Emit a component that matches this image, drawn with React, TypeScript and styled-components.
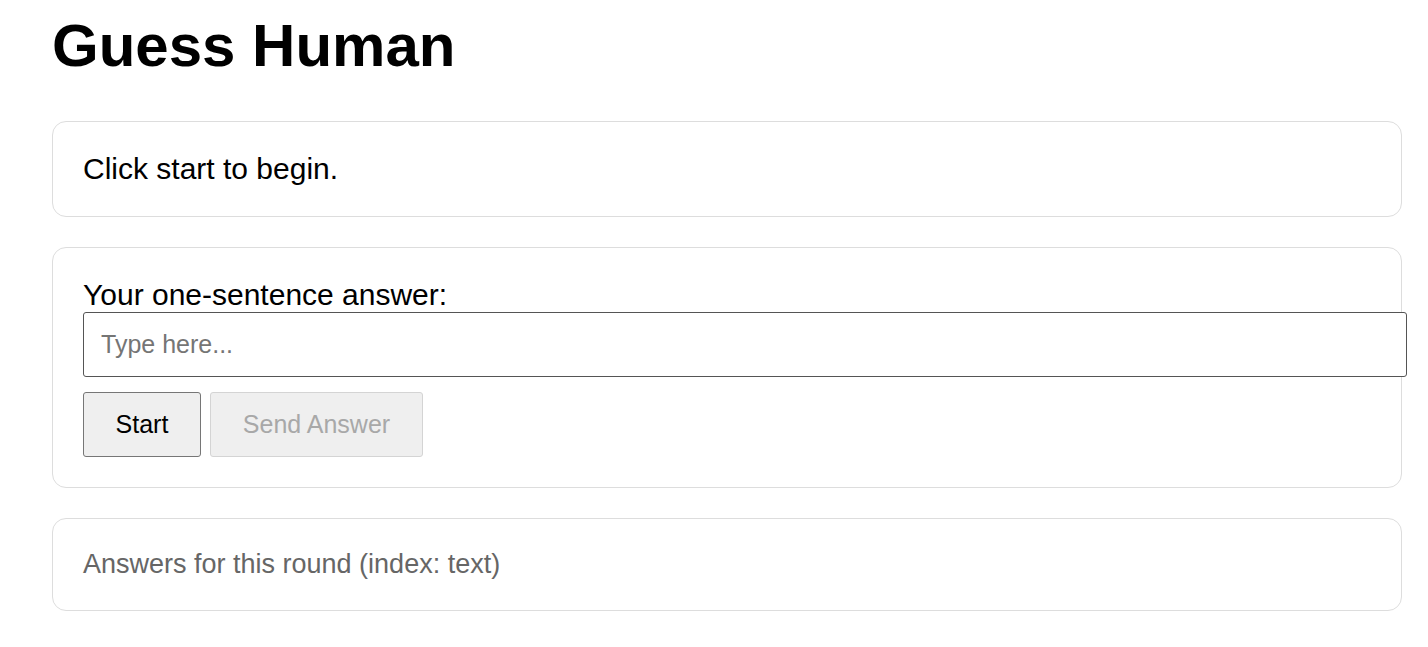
import React from "react";
import styled, { createGlobalStyle } from "styled-components";

const Global = createGlobalStyle`
  html, body { margin: 0; padding: 0; background: #fff; }
  body { font-family: "Liberation Sans", Arial, sans-serif; color: #000; font-size: 30px; }
  * { box-sizing: border-box; }
`;

const Page = styled.main`
  width: 1350px;
  margin-left: 52px;
  display: flex;
  flex-direction: column;
  gap: 30px;
  padding-bottom: 30px;
`;

const Title = styled.h1`
  font-size: 60px;
  font-weight: bold;
  margin: 11px 0 11px 0;
  line-height: 69px;
`;

const Card = styled.section`
  border: 1px solid #dddddd;
  border-radius: 14px;
  padding: 30px;
  background: #fff;
`;

const Status = styled.p`
  margin: 0;
  font-size: 30px;
  line-height: 34px;
`;

const Label = styled.label`
  display: block;
  font-size: 30px;
  line-height: 34px;
`;

const Input = styled.input`
  box-sizing: content-box;
  display: block;
  width: 100%;
  height: 29px;
  padding: 17px;
  margin: 0;
  border: 1px solid #555;
  border-radius: 3px;
  font-family: "Liberation Sans", Arial, sans-serif;
  font-size: 25px;
  color: #000;
  outline: none;
  &::placeholder { color: #757575; }
`;

const Actions = styled.div`
  display: flex;
  gap: 9px;
  margin-top: 15px;
`;

const Button = styled.button<{ $w: number }>`
  width: ${(p) => p.$w}px;
  height: 65px;
  font-family: "Liberation Sans", Arial, sans-serif;
  font-size: 25px;
  background: #efefef;
  color: #000;
  border: 1px solid #767676;
  border-radius: 3px;
  padding: 0;
  &:disabled {
    color: #a8a8a8;
    border-color: #d4d4d4;
    background: #efefef;
  }
`;

const Summary = styled.p`
  margin: 0;
  font-size: 27px;
  line-height: 31px;
  color: #666;
`;

export default function App() {
  return (
    <>
      <Global />
      <Page>
        <Title>Guess Human</Title>
        <Card>
          <Status>Click start to begin.</Status>
        </Card>
        <Card>
          <Label htmlFor="answer">Your one-sentence answer:</Label>
          <Input id="answer" placeholder="Type here..." />
          <Actions>
            <Button $w={118}>Start</Button>
            <Button $w={213} disabled>
              Send Answer
            </Button>
          </Actions>
        </Card>
        <Card>
          <Summary>Answers for this round (index: text)</Summary>
        </Card>
      </Page>
    </>
  );
}
